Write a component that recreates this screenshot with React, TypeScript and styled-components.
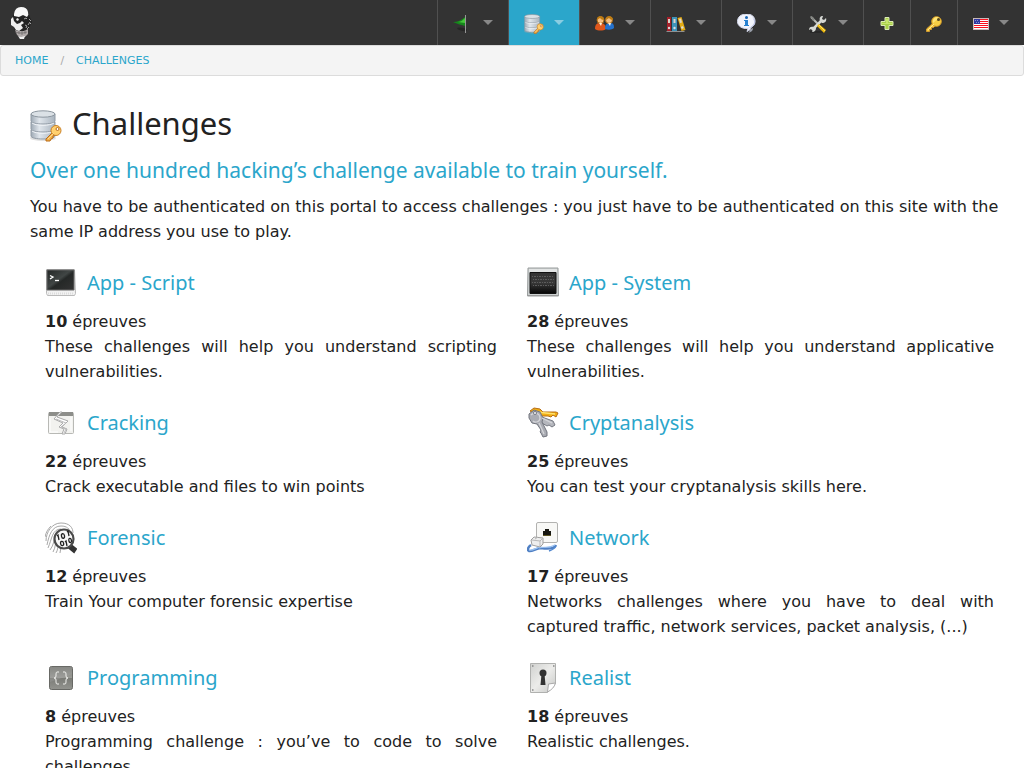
import React from "react";
import styled, { createGlobalStyle, css } from "styled-components";

const GlobalStyle = createGlobalStyle`
  *, *::before, *::after { box-sizing: border-box; }
  body {
    margin: 0;
    background: #fff;
    color: #222;
    font-family: "DejaVu Sans", Verdana, sans-serif;
    font-size: 16px;
    line-height: 25px;
  }
  a { color: #2ba6cb; text-decoration: none; }
  svg { display: block; flex: none; }
`;

const TopBar = styled.header`
  display: flex;
  justify-content: space-between;
  height: 45px;
  background: #333;
`;

const LogoLink = styled.a`
  display: flex;
  align-items: center;
  padding: 1px 0 0 9px;
`;

const MainNav = styled.nav`
  display: flex;
`;

const Menu = styled.ul`
  display: flex;
  margin: 0;
  padding: 0;
  list-style: none;
`;

const MenuItem = styled.li`
  display: flex;
  border-left: 1px solid #505050;
`;

const MenuLink = styled.a<{ $active?: boolean }>`
  display: flex;
  align-items: center;
  gap: 10px;
  padding: 3px 15px 0;
  ${(p) => p.$active && css`background: #2ba6cb;`}
`;

const Caret = styled.span<{ $active?: boolean }>`
  flex: none;
  margin-bottom: 3px;
  border: 5px solid transparent;
  border-top-color: ${(p) => (p.$active ? "#8acde2" : "#888")};
  border-bottom-width: 0;
`;

const Breadcrumbs = styled.nav`
  border: 1px solid #dcdcdc;
  border-radius: 3px;
  background: #f4f4f4;
  padding: 8px 14px 7px;
  font-size: 11px;
  line-height: 14px;
  text-transform: uppercase;

  ol {
    display: flex;
    margin: 0;
    padding: 0;
    list-style: none;
  }
  li + li::before {
    content: "/";
    margin: 0 12px;
    color: #aaa;
  }
`;

const Page = styled.main`
  padding: 28px 16px 0 30px;
`;

const Title = styled.h1`
  display: flex;
  align-items: flex-end;
  gap: 10px;
  margin: 0;
  font: 400 31px/38px "Noto Sans", "Open Sans", sans-serif;
`;

const Subtitle = styled.h2`
  margin: 12px 0 8px;
  color: #2ba6cb;
  font: 400 21px/32px "Noto Sans", "Open Sans", sans-serif;
`;

const Intro = styled.p`
  margin: 0;
`;

const Grid = styled.ul`
  display: grid;
  grid-template-columns: 1fr 1fr;
  margin: 0 14px 0 0;
  padding: 0;
  list-style: none;
`;

const Card = styled.li`
  padding: 23px 15px 0;
  text-align: justify;

  &:nth-child(even) { padding-right: 0; }
`;

const CardTitle = styled.h3`
  margin: 0 0 10px;
  font: 400 20px/32px "Noto Sans", "Open Sans", sans-serif;

  a {
    display: flex;
    align-items: center;
    gap: 10px;
  }
`;

const CardText = styled.p`
  margin: 0;
`;

const Icon = ({ size = 32, box = 32, children }: { size?: number; box?: number; children: React.ReactNode }) => (
  <svg width={size} height={size} viewBox={`0 0 ${box} ${box}`} aria-hidden="true">{children}</svg>
);

const Skull = () => (
  <svg width="25" height="34" viewBox="0 0 25 34" role="img" aria-label="Home">
    <path d="M4 9L20 9 23 16 21 20 19 24 19 28 16 32 11 32 8 28 6 25 5 21 3 18Z" fill="#232323" />
    <path d="M5 8Q6 1 12 1Q18 1 19 6Q20 9 18 11L14 9 10 11 5 10Z" fill="#f8f8f8" />
    <path d="M2 13 4 11 5 15 8 18 11 17 13 15 15 17 12 19 14 22 10 25 7 24 5 21 2 19Z" fill="#eee" />
    <path d="M8 12l2 1-1 2-2-1z" fill="#e8e8e8" />
    <path d="M15 13l2-1 1 1M19 19l2-3M16 19l2 1-1 2M20 13l2 2M18 23l2-2M21 17l1 1" stroke="#a5a5a5" fill="none" />
    <path d="M6 24l4 1 5 0 4-2 0 5-3 3-4 1-4-3z" fill="#b0aaaa" />
    <path d="M6 26l4 1 4 0 4-1M10 25v3m3-3v4m3-5v4" stroke="#6b6767" strokeWidth=".7" fill="none" />
    <path d="M9 30l3 1 4-1-1 3-4 0z" fill="#eee" />
  </svg>
);

const Database = ({ size }: { size?: number }) => (
  <Icon size={size}>
    <defs>
      <linearGradient id="steel"><stop stopColor="#9faab5" /><stop offset=".35" stopColor="#e0e6ec" /><stop offset="1" stopColor="#a9b4bf" /></linearGradient>
    </defs>
    <ellipse cx="13" cy="28" rx="13" ry="3" fill="#aaa" opacity=".35" />
    <path d="M1 20v6c0 4 24 4 24 0v-6z" fill="url(#steel)" stroke="#919ba5" />
    <path d="M1 12v7c0 4 24 4 24 0v-7z" fill="url(#steel)" stroke="#919ba5" />
    <path d="M1 4v7c0 4 24 4 24 0V4z" fill="url(#steel)" stroke="#919ba5" />
    <path d="M2 13c4 3 18 3 22 0M2 21c4 3 18 3 22 0" fill="none" stroke="#f4f7fa" />
    <ellipse cx="13" cy="4" rx="12" ry="3.2" fill="#dbe1e6" stroke="#8c969f" />
    <path d="M23 22 16 29 16 31 20 31 21 29 23 28 23 26 27 24Z" fill="#f4b24b" stroke="#b96a17" strokeLinejoin="round" />
    <circle cx="26" cy="20.5" r="5" fill="#ffd06e" stroke="#c98026" />
    <circle cx="27.5" cy="19" r="1.5" fill="#fff" stroke="#b96a17" />
    <path d="M24 23l-6 6" stroke="#ffd98a" />
  </Icon>
);

const GreenFlag = () => (
  <Icon size={20} box={20}>
    <ellipse cx="9" cy="15.500" rx="5" ry="1.500" fill="#111" opacity=".4" transform="rotate(12 10 16)" />
    <path d="M12 3C9 6 4 8 0 8c4 2 9 3 12 4z" fill="#16871c" />
    <path d="M12 4C9 7 7 8 5 8l7 1z" fill="#48c73b" />
    <path d="M12.500 1v18" stroke="#969696" />
  </Icon>
);

const Users = () => (
  <Icon size={20} box={20}>
    <path d="M0 15c0-5 2-6 5-6s6 1 6 6c-3 2-8 2-11 0z" fill="#df571c" />
    <path d="M10 15c0-5 2-6 5-6s4 1 4 5c-2 2-6 2-9 1z" fill="#2471cd" />
    <circle cx="5.500" cy="6" r="3.500" fill="#f7c083" stroke="#a96910" />
    <circle cx="14" cy="6" r="3.500" fill="#f7c083" stroke="#a96910" />
    <path d="M2 6c0-5 7-5 7 0-2 0-3-1-4-2-1 1-2 1-3 2zM11 6c0-5 7-5 7 0-2 0-3-1-4-2-1 1-2 1-3 2z" fill="#bd7c12" />
    <path d="M4 9l2 3 1-3zM13 9l2 3 1-3z" fill="#fff2df" />
  </Icon>
);

const Binders = () => (
  <Icon size={20} box={20}>
    <path d="M0 17h19l-1 1H1z" fill="#909090" />
    <path d="M1 3h4v14H1z" fill="#a7202a" />
    <path d="M6 3h5v14H6z" fill="#3f93b8" />
    <path d="M11.500 4l4-1 4 13-4 1z" fill="#e4ac14" />
    <path d="M2 5h2v4H2zM7.500 5h2v4h-2zM13 5l2-.5 1 4-2 .5z" fill="#ded6ca" />
    <circle cx="3" cy="14" r="1.200" fill="#ddd" /><circle cx="8.500" cy="14" r="1.200" fill="#ddd" /><circle cx="16.300" cy="13.500" r="1.200" fill="#ddd" />
  </Icon>
);

const Info = () => (
  <Icon size={20} box={20}>
    <path d="M11 16c2 0 2 2 0 3 4-1 5-3 5-5z" fill="#999ea9" />
    <path d="M9.500 0C15 0 18 3 18 7.500c0 3-2 5-4 6-1 2-2 3-4 4l1-3C5 15 .5 12 .5 7.500S4 0 9.500 0z" fill="#f2f4fc" stroke="#d3d8ec" />
    <path d="M15 3c4 5 2 9-4 11 5 0 8-4 7-8z" fill="#bec5e5" />
    <circle cx="9.500" cy="3.500" r="1.500" fill="#1866b5" />
    <path d="M7 6h4v5h1v1H7v-1h1V7H7z" fill="#2580d0" />
  </Icon>
);

const Tools = () => (
  <Icon size={20} box={20}>
    <path d="M2 18h15" stroke="#222" strokeWidth="2" opacity=".6" />
    <path d="M3 3l8 8" stroke="#b9bbb8" strokeWidth="2" />
    <path d="M4 16L14 6" stroke="#d6d8d4" strokeWidth="2.500" />
    <path d="M12 7c-1-3 0-5 3-5l-1 3 2 1 2-2c1 3-1 5-4 5zM6 13c-3-1-5 0-5 3l2-1 2 1-1 2c3 0 4-2 4-4z" fill="#d6d8d4" />
    <path d="M2 2l3 1 2 3-2 1z" fill="#858783" />
    <path d="M11 10l7 6-2 3-7-7z" fill="#edb90e" />
    <path d="M11 11l6 6" stroke="#ffe06a" />
  </Icon>
);

const Plus = () => (
  <Icon size={16} box={16}>
    <path d="M6 1.500h4v4h4v4h-4v4H6v-4H2v-4h4z" fill="#a7cf49" stroke="#dceab7" strokeLinejoin="round" />
    <path d="M7 3h2v4h4v1H3V7h4z" fill="#c6e46d" />
  </Icon>
);

const Key = () => (
  <Icon size={16} box={16}>
    <path d="M7 7L0.500 13v2.500h3v-2h2v-2h2l3-3z" fill="#f9cd42" stroke="#d09a30" />
    <circle cx="10.500" cy="5.500" r="4.800" fill="#f7ce45" stroke="#dca228" />
    <path d="M7 4c1-3 4-4 6-2L7 7z" fill="#ffe577" />
    <circle cx="12.500" cy="3.500" r="1.500" fill="#544820" />
    <path d="M2 14l6-6" stroke="#ffe98f" />
  </Icon>
);

const UsFlag = () => (
  <Icon size={16} box={16}>
    <path d="M0 2h16v12H0z" fill="#c8b8b8" />
    <path d="M1 3h14v10H1z" fill="#f8101c" />
    <path d="M1 4h14v1H1zM1 6h14v1H1zM1 8h14v1H1zM1 10h14v1H1zM1 12h14v1H1z" fill="#fff" />
    <path d="M1 3h6v5H1z" fill="#3038a0" />
    <path d="M2 4h1v1H2zM4 4h1v1H4zM3 6h1v1H3zM5 6h1v1H5z" fill="#8a91cf" />
  </Icon>
);

const Terminal = () => (
  <Icon>
    <defs><linearGradient id="screen" x2="1" y2="1"><stop stopColor="#222625" /><stop offset=".45" stopColor="#414645" /><stop offset=".55" stopColor="#252827" /><stop offset="1" stopColor="#333" /></linearGradient></defs>
    <path d="M1.500 2.500h28l1 24-1 2h-27l-1-2z" fill="#f2f2f2" stroke="#bbb" />
    <path d="M2 3h27v20H2z" fill="url(#screen)" stroke="#666" />
    <path d="M5 8.500l3 1.500-3 2" fill="none" stroke="#fff" strokeWidth="1.300" /><path d="M10 13.500h4" stroke="#fff" strokeWidth="1.300" />
    <path d="M3 26.500h25" stroke="#dcdcdc" strokeWidth="2" strokeDasharray="1 1" />
  </Icon>
);

const Monitor = () => (
  <Icon>
    <defs><linearGradient id="dark" x2="0" y2="1"><stop stopColor="#343434" /><stop offset=".5" stopColor="#383838" /><stop offset="1" stopColor="#050505" /></linearGradient></defs>
    <path d="M1 1h30l.5 28h-31z" fill="#ccd0d0" stroke="#999d9d" />
    <path d="M2 2h28v3H2z" fill="#e2e4e4" />
    <path d="M3 5.500h26v21H3z" fill="url(#dark)" stroke="#111" />
    <path d="M5 9.500h22M6 12.500h21M5 15.500h22M6 18.500h21" stroke="#5c5c5c" strokeDasharray="1 1 2 1" />
    <path d="M1 28.500h30" stroke="#999" />
  </Icon>
);

const Crack = () => (
  <Icon>
    <rect x="3.500" y="5.500" width="25" height="21" rx="1" fill="#f2f2ef" stroke="#b8b9b5" />
    <path d="M4 5h24v4H4z" fill="#8d8e8a" />
    <path d="M15 5l-6 7 9 4-4 4 5 2-2 5h3l2-5-5-2 6-6-11-4 5-5z" fill="#fff" stroke="#aaa" />
    <path d="M11 12l10 4-5 4 5 2-2 4" fill="none" stroke="#bbb" />
    <path d="M5 11v14h8M26 10v14" stroke="#fff" fill="none" />
  </Icon>
);

const Keys = () => (
  <Icon>
    <path d="M3 4l4-3 6 1 3 3 13 0 2 1-2 4-3-2-2 2-3-1H12z" fill="#f3af13" stroke="#b86e16" />
    <path d="M10 5l18 2" stroke="#ffe270" strokeWidth="1.500" />
    <path d="M12 9l14 5 2 4-3 2-3-2-2 1-10-6z" fill="#b5b7bd" stroke="#777a83" />
    <path d="M2 7l5-4 6 2 3 6-1 4 5 10v4l-4 1-2-4-1-1 1-2-4-6-5-1-3-5z" fill="#aaacb3" stroke="#72757e" />
    <path d="M4 8c4-4 9-1 9 3s-5 5-7 3M12 16l5 11M15 11l10 5" fill="none" stroke="#d5d6da" strokeWidth="1.300" />
    <circle cx="8" cy="6" r="1.500" fill="#fff" stroke="#777a83" />
  </Icon>
);

const Fingerprint = () => (
  <Icon>
    <g fill="none" stroke="#a8a8a8" strokeWidth="1">
      <path d="M1 19C1 10 7 1 16 1s12 5 12 10M2 23C4 13 7 4 16 4c6 0 9 3 9 7M3 26C7 17 7 7 16 7M5 28c4-5 4-11 6-16M8 30c3-5 2-10 4-14M11 31c2-3 2-7 2-10M15 31l1-6M0 15c1-5 3-8 6-11" />
    </g>
    <path d="M26 23l5 4-2 3-6-5z" fill="#333" stroke="#333" strokeWidth="2" />
    <circle cx="19" cy="17" r="9.500" fill="#f7f7f7" stroke="#4a4a4a" strokeWidth="2.200" />
    <g fill="none" stroke="#222" strokeWidth="1.300">
      <path d="M12 14l1-1 1 5M22 10l1-1 1 5M20 20l1-1 1 5" />
      <ellipse cx="18" cy="14" rx="1.500" ry="2.300" transform="rotate(-12 18 14)" /><ellipse cx="17" cy="21.500" rx="1.500" ry="2.200" transform="rotate(-12 17 21)" /><ellipse cx="25" cy="18.500" rx="1.300" ry="2.200" transform="rotate(-12 25 18)" />
    </g>
  </Icon>
);

const NetworkPlug = () => (
  <Icon>
    <rect x="9.500" y=".5" width="21" height="20" rx="1.500" fill="#f8f8f6" stroke="#b2b2b0" />
    <path d="M16 14V9h2V7h4v2h2v5z" fill="#171711" /><path d="M16 13.500h8" stroke="#5f5725" />
    <path d="M4 23c-3 2-4 5-2 6 3 1 7-3 12-3 6 1 13 1 15-3" fill="none" stroke="#5080c4" strokeWidth="2.500" />
    <path d="M12 26c5-2 10 1 16-3M2 28c4 1 8-3 12-3" fill="none" stroke="#9cc3f2" strokeWidth="1.200" />
    <path d="M22 29c3-1 6-3 7-5" fill="none" stroke="#5288cf" strokeWidth="1.500" />
    <path d="M4 18l3-3 9 1v6l-3 3-8-2z" fill="#eee" stroke="#a0a0a0" />
    <path d="M5 18l8 1 3-3M13 19v5M8 17l3-2" fill="none" stroke="#b8b8b8" />
  </Icon>
);

const Braces = () => (
  <Icon>
    <defs><linearGradient id="button" x2="0" y2="1"><stop stopColor="#777873" /><stop offset=".5" stopColor="#9a9b96" /><stop offset=".51" stopColor="#7a7b76" /><stop offset="1" stopColor="#93948f" /></linearGradient></defs>
    <rect x="4.500" y="4.500" width="23" height="23" rx="2" fill="url(#button)" stroke="#686965" />
    <path d="M5 5h22v7Q18 16 5 20z" fill="#aaa" opacity=".3" />
    <path d="M14 10h-2q-1 0-1 2v2q0 2-2 2 2 0 2 2v2q0 2 1 2h2M18 10h2q1 0 1 2v2q0 2 2 2-2 0-2 2v2q0 2-1 2h-2" fill="none" stroke="#f0f0ed" />
  </Icon>
);

const Keyhole = () => (
  <Icon>
    <defs><linearGradient id="plate" x2="1" y2="1"><stop stopColor="#d0d1cf" /><stop offset=".5" stopColor="#ececea" /><stop offset="1" stopColor="#c6c7c5" /></linearGradient></defs>
    <path d="M3.500 1.500h25v20l-8 9h-17z" fill="url(#plate)" stroke="#b0b1af" />
    <path d="M20.500 30l1-8 7-1c-1 4-4 7-8 9z" fill="#fff" stroke="#aaa" />
    <path d="M5 4h1.500M26 4h1.500M5 28h1.500" stroke="#888" strokeWidth="1.500" />
    <circle cx="16" cy="11" r="3.500" fill="#333" /><path d="M14.500 12h3l1 11h-5z" fill="#333" />
  </Icon>
);

const menu = [
  { label: "Portal", icon: <GreenFlag />, dropdown: true },
  { label: "Challenges", icon: <Database size={20} />, dropdown: true, active: true },
  { label: "Community", icon: <Users />, dropdown: true },
  { label: "Documentation", icon: <Binders />, dropdown: true },
  { label: "Information", icon: <Info />, dropdown: true },
  { label: "Tools", icon: <Tools />, dropdown: true },
  { label: "Register", icon: <Plus /> },
  { label: "Log in", icon: <Key /> },
  { label: "Language", icon: <UsFlag />, dropdown: true },
];

const categories = [
  { name: "App - Script", icon: <Terminal />, count: 10, text: "These challenges will help you understand scripting vulnerabilities." },
  { name: "App - System", icon: <Monitor />, count: 28, text: "These challenges will help you understand applicative vulnerabilities." },
  { name: "Cracking", icon: <Crack />, count: 22, text: "Crack executable and files to win points" },
  { name: "Cryptanalysis", icon: <Keys />, count: 25, text: "You can test your cryptanalysis skills here." },
  { name: "Forensic", icon: <Fingerprint />, count: 12, text: "Train Your computer forensic expertise" },
  { name: "Network", icon: <NetworkPlug />, count: 17, text: "Networks challenges where you have to deal with captured traffic, network services, packet analysis, (...)" },
  { name: "Programming", icon: <Braces />, count: 8, text: "Programming challenge : you’ve to code to solve challenges." },
  { name: "Realist", icon: <Keyhole />, count: 18, text: "Realistic challenges." },
];

export default function App() {
  return (
    <>
      <GlobalStyle />
      <TopBar>
        <LogoLink href="#home"><Skull /></LogoLink>
        <MainNav aria-label="Main">
          <Menu>
            {menu.map((m) => (
              <MenuItem key={m.label}>
                <MenuLink href="#menu" aria-label={m.label} $active={m.active}>
                  {m.icon}
                  {m.dropdown && <Caret $active={m.active} />}
                </MenuLink>
              </MenuItem>
            ))}
          </Menu>
        </MainNav>
      </TopBar>
      <Breadcrumbs aria-label="Breadcrumb">
        <ol>
          <li><a href="#home">Home</a></li>
          <li><a href="#challenges">Challenges</a></li>
        </ol>
      </Breadcrumbs>
      <Page>
        <Title><Database />Challenges</Title>
        <Subtitle>Over one hundred hacking’s challenge available to train yourself.</Subtitle>
        <Intro>
          You have to be authenticated on this portal to access challenges : you just have to be
          authenticated on this site with the same IP address you use to play.
        </Intro>
        <Grid>
          {categories.map((c) => (
            <Card key={c.name}>
              <CardTitle><a href="#category">{c.icon}{c.name}</a></CardTitle>
              <CardText><strong>{c.count}</strong> épreuves</CardText>
              <CardText>{c.text}</CardText>
            </Card>
          ))}
        </Grid>
      </Page>
    </>
  );
}
